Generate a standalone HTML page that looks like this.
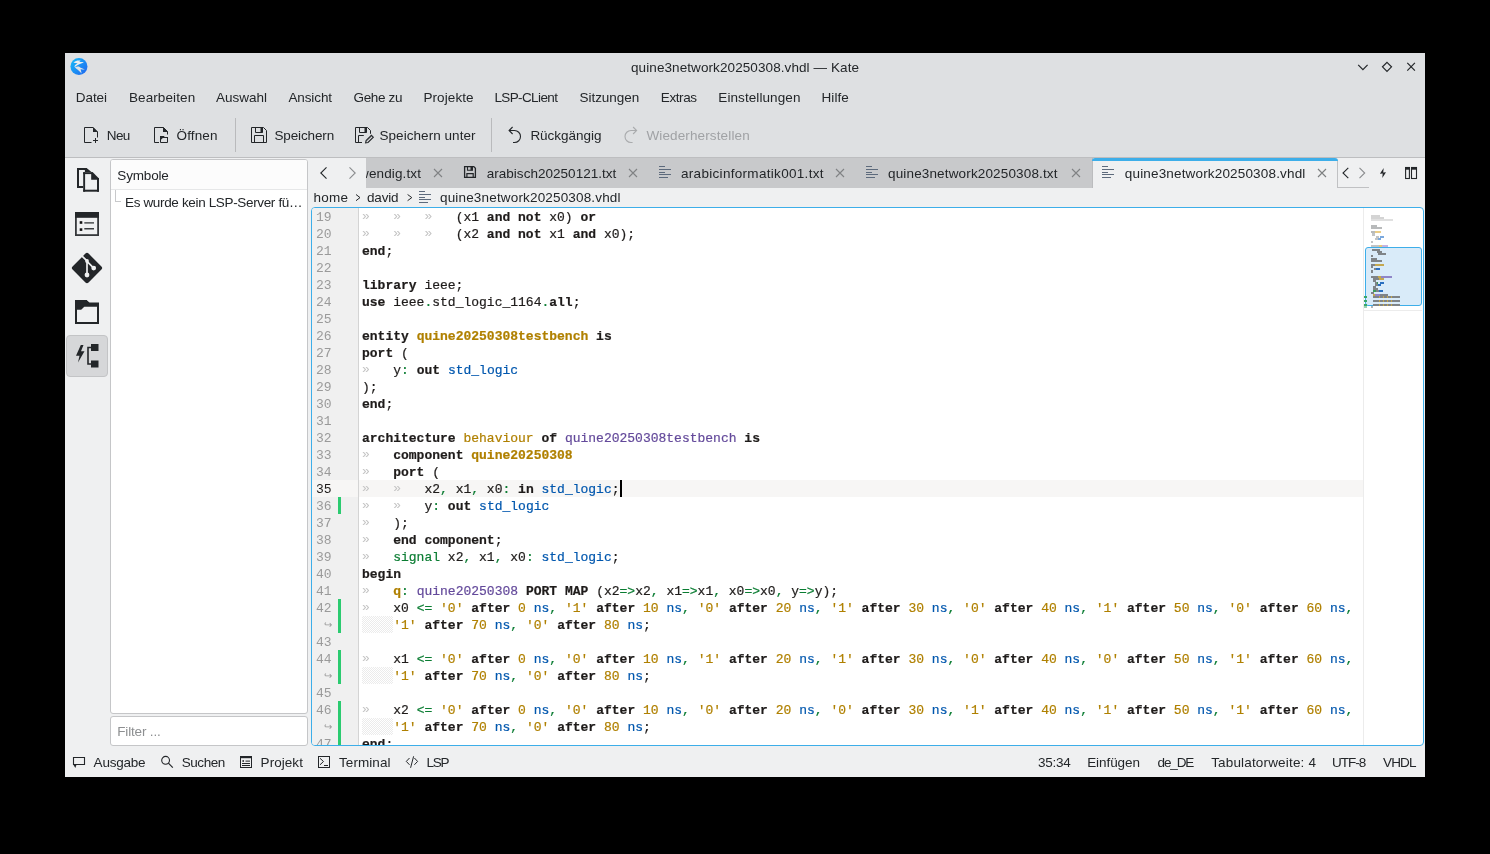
<!DOCTYPE html>
<html><head><meta charset="utf-8"><title>Kate</title><style>
html,body{margin:0;padding:0}
body{width:1490px;height:854px;background:#000;position:relative;overflow:hidden;font-family:"Liberation Sans",sans-serif}
#root{position:absolute;left:0;top:0;width:1490px;height:854px;will-change:transform;background:#000}
.t{position:absolute;white-space:nowrap;line-height:20px}
.r{position:absolute}
.s{position:absolute;overflow:visible}
.clip{position:absolute;overflow:hidden}
.ln{position:absolute;font-family:"Liberation Mono",monospace;font-size:13px;line-height:17px}
.wr{position:absolute;font-family:"Liberation Sans",sans-serif;font-size:10px;line-height:17px;color:#9a9a9a}
.chk{position:absolute;background-color:#fff;background-image:linear-gradient(45deg,#ebebeb 25%,transparent 25%,transparent 75%,#ebebeb 75%),linear-gradient(45deg,#ebebeb 25%,transparent 25%,transparent 75%,#ebebeb 75%);background-size:2px 2px;background-position:0 0,1px 1px}
.cl{position:absolute;left:50px;white-space:pre;font-family:"Liberation Mono",monospace;font-size:13px;line-height:17px;color:#1f1c1b;-webkit-text-stroke:0.2px currentColor}
.k{font-weight:bold}
.g{color:#b08000}
.gb{color:#b08000;font-weight:bold}
.p{color:#644a9b}
.b{color:#0057ae}
.o{color:#0b7d33}
.i{color:#c4c4c4;position:relative;top:-1px;-webkit-text-stroke:0}
</style></head><body><div id="root">
<div class="r" style="left:65px;top:53px;width:1360px;height:724px;background:#eff0f1;"></div>
<div class="r" style="left:65px;top:53px;width:1360px;height:104px;background:#dee0e2;"></div>
<div class="r" style="left:65px;top:157px;width:1360px;height:1px;background:#bdbec0;"></div>
<svg class="s" style="left:68px;top:56px;" width="22" height="22" viewBox="0 0 22 22"><defs><linearGradient id="kg" x1="0.1" y1="0.2" x2="0.9" y2="0.9"><stop offset="0" stop-color="#17b0f7"/><stop offset="1" stop-color="#1f6cf0"/></linearGradient></defs>
<circle cx="10.95" cy="10.6" r="8.5" fill="url(#kg)"/>
<path d="M5.4 6.6 C7.5 4.6 10.5 4.2 12.6 4.7 L11.2 6.1 C13 5.9 14.6 5.9 15.9 6.3 C13.2 8 9.5 8.6 6.6 11.2 C6.2 9.8 7.5 8.4 9.6 7.3 C8 7.1 6.6 6.9 5.4 6.6 Z" fill="#eceef0"/>
<path d="M6.9 11.3 C9.3 10.2 11.4 10.4 12.1 11.6 L16.9 13.5 C15.2 13.7 13.9 13.4 12.6 13 L13.6 17.6 L10.6 14.6 C9.1 13.2 7.6 12.3 6.9 11.3 Z" fill="#dfe2e6"/></svg>
<div class="t" style="left:631.00px;top:58px;font-size:13.5px;color:#232629;letter-spacing:0.088px;">quine3network20250308.vhdl — Kate</div>
<svg class="s" style="left:1350px;top:55px;" width="75" height="25" viewBox="0 0 75 25"><g fill="none" stroke="#232629" stroke-width="1.2">
<path d="M8.2 9.9 L12.9 14.6 L17.6 9.9"/>
<path d="M37 7.3 L41.5 11.8 L37 16.3 L32.5 11.8 Z"/>
<path d="M57.3 7.9 L64.9 15.6 M64.9 7.9 L57.3 15.6"/></g></svg>
<div class="t" style="left:75.70px;top:88px;font-size:13.5px;color:#232629;letter-spacing:-0.031px;">Datei</div>
<div class="t" style="left:128.90px;top:88px;font-size:13.5px;color:#232629;letter-spacing:0.114px;">Bearbeiten</div>
<div class="t" style="left:216.10px;top:88px;font-size:13.5px;color:#232629;letter-spacing:-0.005px;">Auswahl</div>
<div class="t" style="left:288.40px;top:88px;font-size:13.5px;color:#232629;letter-spacing:-0.097px;">Ansicht</div>
<div class="t" style="left:353.60px;top:88px;font-size:13.5px;color:#232629;letter-spacing:-0.372px;">Gehe zu</div>
<div class="t" style="left:423.40px;top:88px;font-size:13.5px;color:#232629;letter-spacing:0.094px;">Projekte</div>
<div class="t" style="left:494.40px;top:88px;font-size:13.5px;color:#232629;letter-spacing:-0.606px;">LSP-CLient</div>
<div class="t" style="left:579.50px;top:88px;font-size:13.5px;color:#232629;letter-spacing:-0.034px;">Sitzungen</div>
<div class="t" style="left:660.80px;top:88px;font-size:13.5px;color:#232629;letter-spacing:-0.414px;">Extras</div>
<div class="t" style="left:718.30px;top:88px;font-size:13.5px;color:#232629;letter-spacing:0.086px;">Einstellungen</div>
<div class="t" style="left:821.60px;top:88px;font-size:13.5px;color:#232629;letter-spacing:0.025px;">Hilfe</div>
<svg class="s" style="left:78px;top:122px;" width="26" height="26" viewBox="0 0 26 26"><path d="M13.5 20.5 H6.5 V5.5 H15 L19.5 10 V15.5" fill="none" stroke="#232629" stroke-width="1"/>
<path d="M15 5 L20 10 H15 Z" fill="#232629"/>
<rect x="17" y="16" width="1" height="5" fill="#232629"/><rect x="15" y="18" width="5" height="1" fill="#232629"/></svg>
<div class="t" style="left:106.80px;top:126px;font-size:13.5px;color:#232629;letter-spacing:-0.636px;">Neu</div>
<svg class="s" style="left:150px;top:122px;" width="26" height="26" viewBox="0 0 26 26"><path d="M9 20.5 H4.5 V5.5 H13.5 L17.5 9.5 V12.5" fill="none" stroke="#232629" stroke-width="1"/>
<path d="M13 5 L18 10 H13 Z" fill="#232629"/>
<path d="M10.5 20.5 V14.5 H13.5 L14.5 15.5 H17.5 V20.5 Z" fill="none" stroke="#232629" stroke-width="1"/>
<path d="M10 14 H13.8 L14.8 15 H18 V16 H12.8 L11.3 17.5 H10 Z" fill="#232629"/></svg>
<div class="t" style="left:176.60px;top:126px;font-size:13.5px;color:#232629;letter-spacing:0.120px;">Öffnen</div>
<div class="r" style="left:235px;top:118px;width:1px;height:34px;background:#b9babc;"></div>
<svg class="s" style="left:246px;top:122px;" width="26" height="26" viewBox="0 0 26 26"><path d="M5.5 5.5 H17.5 L20.5 8.5 V20.5 H5.5 Z" fill="none" stroke="#232629" stroke-width="1"/>
<path d="M9.5 5.5 V10.5 H16.5 V5.5" fill="none" stroke="#232629" stroke-width="1"/>
<rect x="14.5" y="5.5" width="2.2" height="5" fill="#232629"/>
<path d="M8.5 20.5 V13.5 H17.5 V20.5" fill="none" stroke="#232629" stroke-width="1"/></svg>
<div class="t" style="left:274.40px;top:126px;font-size:13.5px;color:#232629;letter-spacing:-0.127px;">Speichern</div>
<svg class="s" style="left:350px;top:122px;" width="26" height="26" viewBox="0 0 26 26"><path d="M12 20.5 H5.5 V5.5 H17.5 L20.5 8.5 V11.8" fill="none" stroke="#232629" stroke-width="1"/>
<path d="M9.5 5.5 V10.5 H16.5 V5.5" fill="none" stroke="#232629" stroke-width="1"/>
<rect x="14.5" y="5.5" width="2.2" height="5" fill="#232629"/>
<path d="M13.8 13.5 H8.5 V20.5" fill="none" stroke="#232629" stroke-width="1"/>
<path d="M15.6 20.9 L16.1 18.6 L21.4 13.3 L23.3 15.2 L18 20.5 Z" fill="none" stroke="#232629" stroke-width="1.1"/>
<path d="M16.8 19.2 L21.8 14.2" stroke="#232629" stroke-width="0.6" stroke-dasharray="0.8 0.8"/></svg>
<div class="t" style="left:379.50px;top:126px;font-size:13.5px;color:#232629;letter-spacing:0.049px;">Speichern unter</div>
<div class="r" style="left:491px;top:118px;width:1px;height:34px;background:#b9babc;"></div>
<svg class="s" style="left:502px;top:122px;" width="26" height="26" viewBox="0 0 26 26"><path d="M7 8.5 H12.5 A6 6 0 0 1 12.5 20.5 H11" fill="none" stroke="#232629" stroke-width="1.1"/>
<path d="M10.6 5 L7.1 8.5 L10.6 12" fill="none" stroke="#232629" stroke-width="1.1"/></svg>
<div class="t" style="left:530.40px;top:126px;font-size:13.5px;color:#232629;letter-spacing:-0.031px;">Rückgängig</div>
<svg class="s" style="left:618px;top:122px;" width="26" height="26" viewBox="0 0 26 26"><path d="M18.7 8.5 H13 A6 6 0 0 0 13 20.5 H14.6" fill="none" stroke="#a9abad" stroke-width="1.1"/>
<path d="M15.1 5 L18.6 8.5 L15.1 12" fill="none" stroke="#a9abad" stroke-width="1.1"/></svg>
<div class="t" style="left:646.40px;top:126px;font-size:13.5px;color:#a0a2a5;letter-spacing:0.132px;">Wiederherstellen</div>
<svg class="s" style="left:74px;top:165px;" width="28" height="30" viewBox="0 0 28 30"><g fill="#232629">
<rect x="3" y="3" width="2" height="20"/><rect x="3" y="3" width="9.6" height="2"/><rect x="3" y="21" width="6.2" height="2"/>
<path d="M10.9 3 H12.6 L17.8 7.2 H10.9 Z"/>
<rect x="9.2" y="7.2" width="1.9" height="19.5"/><rect x="9.2" y="7.2" width="9.6" height="1.9"/>
<rect x="9.2" y="24.7" width="15.8" height="2"/><rect x="23" y="13" width="2" height="13.7"/>
<path d="M17.2 7.2 H18.8 L25 13.4 V14.8 H17.2 Z"/></g></svg>
<svg class="s" style="left:75px;top:212px;" width="24" height="24" viewBox="0 0 24 24"><rect x="0.9" y="0.9" width="22.2" height="22.2" fill="none" stroke="#35383b" stroke-width="1.8"/>
<rect x="0" y="0" width="24" height="5.8" fill="#232629"/>
<rect x="4.7" y="9.2" width="2.6" height="2.6" fill="#111"/><rect x="9.3" y="10.3" width="9.7" height="1.2" fill="#232629"/>
<rect x="4.7" y="16.3" width="2.6" height="2.6" fill="#111"/><rect x="9.3" y="16" width="9.7" height="1.5" fill="#3a3d40"/></svg>
<svg class="s" style="left:70px;top:251px;" width="34" height="34" viewBox="0 0 34 34"><rect x="5.7" y="5.7" width="22.6" height="22.6" rx="2.2" transform="rotate(45 17 17)" fill="#232629"/>
<path d="M11.3 4.3 L17 9.8 V23.5 M17 10.3 L23.7 17.1" fill="none" stroke="#eff0f1" stroke-width="1.7"/>
<circle cx="17" cy="10" r="1.9" fill="#eff0f1"/><circle cx="23.7" cy="17.1" r="2.4" fill="#eff0f1"/><circle cx="17" cy="24" r="2.4" fill="#eff0f1"/></svg>
<svg class="s" style="left:75px;top:300px;" width="24" height="24" viewBox="0 0 24 24"><path d="M1 23 V1 H11 L14 3.5 H23 V23 Z" fill="none" stroke="#232629" stroke-width="2"/>
<path d="M0 0 H11.5 L14.5 3 H24 V6.5 H9 L6 9.5 H0 Z" fill="#232629"/>
<path d="M1 8.5 H6 L9 5.5 H23" fill="none" stroke="#232629" stroke-width="2"/></svg>
<div class="r" style="left:66px;top:335px;width:42px;height:42px;background:#d6d7d9;border:1px solid #c3c4c6;border-radius:4px;box-sizing:border-box"></div>
<svg class="s" style="left:74px;top:343px;" width="26" height="26" viewBox="0 0 26 26"><path d="M6.3 1.5 L1.5 12.2 H5 L3.5 19 L10 7.8 H6.5 L9 1.5 Z" fill="#232629" transform="translate(0.5,0.5)"/>
<rect x="17" y="1" width="7.5" height="7" fill="#232629"/>
<rect x="17" y="17.5" width="7.5" height="7" fill="#232629"/>
<path d="M17 4.5 H14 V21 H17" fill="none" stroke="#232629" stroke-width="1.6"/></svg>
<div class="r" style="left:110px;top:159px;width:198px;height:555px;background:#ffffff;border:1px solid #c5c6c8;border-radius:3px;box-sizing:border-box"></div>
<div class="r" style="left:111px;top:160px;width:196px;height:29px;background:#fcfcfc;border-radius:2px 2px 0 0"></div>
<div class="r" style="left:111px;top:189px;width:196px;height:1px;background:#e6e7e8;"></div>
<div class="t" style="left:117.30px;top:166px;font-size:13.5px;color:#232629;letter-spacing:-0.169px;">Symbole</div>
<div class="r" style="left:115px;top:190px;width:1px;height:11px;background:#c8c9cb;"></div>
<div class="r" style="left:115px;top:201px;width:6px;height:1px;background:#c8c9cb;"></div>
<div class="t" style="left:125.00px;top:193px;font-size:13.5px;color:#232629;letter-spacing:-0.346px;">Es wurde kein LSP-Server fü…</div>
<div class="r" style="left:110px;top:716px;width:198px;height:30px;background:#ffffff;border:1px solid #c5c6c8;border-radius:3px;box-sizing:border-box"></div>
<div class="t" style="left:117.30px;top:722px;font-size:13.5px;color:#8d8f91;letter-spacing:-0.169px;">Filter ...</div>
<svg class="s" style="left:318px;top:165px;" width="40" height="16" viewBox="0 0 40 16"><path d="M8.5 2.3 L2.8 8 L8.5 13.7" fill="none" stroke="#232629" stroke-width="1.1"/>
<path d="M31.5 2.3 L37.2 8 L31.5 13.7" fill="none" stroke="#8a8c8e" stroke-width="1.1"/></svg>
<div class="r" style="left:366px;top:158px;width:727px;height:30px;background:#c8c9cb;"></div>
<div class="r" style="left:1092px;top:158px;width:1px;height:30px;background:#bbbcbe;"></div>
<div class="r" style="left:366px;top:158px;width:70px;height:30px;overflow:hidden">
<div class="t" style="left:-26.17px;top:6px;font-size:13.5px;color:#232629;letter-spacing:0.133px;">notwendig.txt</div>
</div>
<svg class="s" style="left:433px;top:168px;" width="10" height="10" viewBox="0 0 10 10"><path d="M1 1 L9 9 M9 1 L1 9" stroke="#808284" stroke-width="1.1"/></svg>
<svg class="s" style="left:458px;top:160px;" width="26" height="26" viewBox="0 0 26 26"><path d="M6.6 6.6 H15.8 L17.4 8.2 V17.4 H6.6 Z" fill="none" stroke="#232629" stroke-width="1.3"/>
<path d="M9.5 6.6 V10.3 H14.4 V6.6" fill="none" stroke="#232629" stroke-width="1.1"/>
<rect x="12.5" y="6.6" width="2.2" height="3.8" fill="#232629"/>
<path d="M8.9 17.4 V13.6 H15.2 V17.4" fill="none" stroke="#232629" stroke-width="1.2"/></svg>
<div class="t" style="left:486.70px;top:164px;font-size:13.5px;color:#232629;letter-spacing:0.030px;">arabisch20250121.txt</div>
<svg class="s" style="left:628px;top:168px;" width="10" height="10" viewBox="0 0 10 10"><path d="M1 1 L9 9 M9 1 L1 9" stroke="#808284" stroke-width="1.1"/></svg>
<svg class="s" style="left:659px;top:166px;" width="13" height="12" viewBox="0 0 13 12"><g fill="#5d6a7c"><rect x="0" y="0" width="6" height="1"/><rect x="0" y="3" width="12" height="1"/><rect x="0" y="6" width="6" height="1"/><rect x="0" y="8" width="12" height="1"/><rect x="0" y="11" width="9" height="1"/></g></svg>
<div class="t" style="left:681.00px;top:164px;font-size:13.5px;color:#232629;letter-spacing:0.304px;">arabicinformatik001.txt</div>
<svg class="s" style="left:835px;top:168px;" width="10" height="10" viewBox="0 0 10 10"><path d="M1 1 L9 9 M9 1 L1 9" stroke="#808284" stroke-width="1.1"/></svg>
<svg class="s" style="left:866px;top:166px;" width="13" height="12" viewBox="0 0 13 12"><g fill="#5d6a7c"><rect x="0" y="0" width="6" height="1"/><rect x="0" y="3" width="12" height="1"/><rect x="0" y="6" width="6" height="1"/><rect x="0" y="8" width="12" height="1"/><rect x="0" y="11" width="9" height="1"/></g></svg>
<div class="t" style="left:888.00px;top:164px;font-size:13.5px;color:#232629;letter-spacing:0.152px;">quine3network20250308.txt</div>
<svg class="s" style="left:1071px;top:168px;" width="10" height="10" viewBox="0 0 10 10"><path d="M1 1 L9 9 M9 1 L1 9" stroke="#808284" stroke-width="1.1"/></svg>
<div class="r" style="left:1092px;top:158px;width:246px;height:3px;background:#3daee9;border-radius:3px 3px 0 0"></div>
<svg class="s" style="left:1102px;top:166px;" width="13" height="12" viewBox="0 0 13 12"><g fill="#5d6a7c"><rect x="0" y="0" width="6" height="1"/><rect x="0" y="3" width="12" height="1"/><rect x="0" y="6" width="6" height="1"/><rect x="0" y="8" width="12" height="1"/><rect x="0" y="11" width="9" height="1"/></g></svg>
<div class="t" style="left:1124.80px;top:164px;font-size:13.5px;color:#232629;letter-spacing:0.165px;">quine3network20250308.vhdl</div>
<svg class="s" style="left:1317px;top:168px;" width="10" height="10" viewBox="0 0 10 10"><path d="M1 1 L9 9 M9 1 L1 9" stroke="#7d7f81" stroke-width="1.1"/></svg>
<div class="r" style="left:1337px;top:161px;width:1px;height:27px;background:#c0c1c3;"></div>
<div class="r" style="left:1337px;top:187px;width:32px;height:1px;background:#c0c1c3;"></div>
<svg class="s" style="left:1338px;top:165px;" width="30" height="16" viewBox="0 0 30 16"><path d="M10.3 2.8 L5 8 L10.3 13.2" fill="none" stroke="#232629" stroke-width="1.1"/>
<path d="M21.5 2.8 L26.7 8 L21.5 13.2" fill="none" stroke="#8a8c8e" stroke-width="1.1"/></svg>
<svg class="s" style="left:1374px;top:162px;" width="16" height="20" viewBox="0 0 16 20"><path d="M9.7 6 L5.9 11.7 L8.7 11.4 L8.3 16 L12 10.2 L9.2 10.5 Z" fill="#232629"/></svg>
<svg class="s" style="left:1404px;top:166px;" width="14" height="14" viewBox="0 0 14 14"><rect x="1.6" y="1.5" width="3.8" height="11" fill="none" stroke="#232629" stroke-width="1.1"/>
<rect x="7.5" y="1.5" width="5" height="11" fill="none" stroke="#232629" stroke-width="1.1"/>
<rect x="1" y="1" width="5" height="2.7" fill="#232629"/><rect x="7" y="1" width="6" height="2.7" fill="#232629"/></svg>
<div class="t" style="left:313.40px;top:188px;font-size:13.5px;color:#232629;letter-spacing:0.283px;">home</div>
<svg class="s" style="left:354px;top:192px;" width="9" height="11" viewBox="0 0 9 11"><path d="M2 2.5 L6 5.6 L2 8.7" fill="none" stroke="#232629" stroke-width="1"/></svg>
<div class="t" style="left:367.00px;top:188px;font-size:13.5px;color:#232629;letter-spacing:-0.191px;">david</div>
<svg class="s" style="left:406px;top:192px;" width="9" height="11" viewBox="0 0 9 11"><path d="M1.6 2.5 L5.8 5.6 L1.6 8.7" fill="none" stroke="#232629" stroke-width="1"/></svg>
<svg class="s" style="left:419px;top:191px;" width="13" height="12" viewBox="0 0 13 12"><g fill="#5d6a7c"><rect x="0" y="0" width="6" height="1"/><rect x="0" y="3" width="12" height="1"/><rect x="0" y="6" width="6" height="1"/><rect x="0" y="8" width="12" height="1"/><rect x="0" y="11" width="9" height="1"/></g></svg>
<div class="t" style="left:440.00px;top:188px;font-size:13.5px;color:#232629;letter-spacing:0.165px;">quine3network20250308.vhdl</div>
<div class="r" style="left:311px;top:207px;width:1113px;height:539px;background:#ffffff;border:1px solid #3daee9;border-radius:4px;box-sizing:border-box"></div>
<div class="r" style="left:312px;top:208px;width:46px;height:537px;background:#f0f0f0;border-radius:3px 0 0 3px"></div>
<div class="r" style="left:358px;top:208px;width:1px;height:537px;background:#d4d4d4;"></div>
<div class="r" style="left:1363px;top:208px;width:1px;height:537px;background:#ececec;"></div>
<div class="r" style="left:359px;top:480px;width:1004px;height:17px;background:#f7f6f5;"></div>
<div class="r" style="left:312px;top:480px;width:46px;height:17px;background:#f7f6f5;"></div>
<div class="clip" style="left:312px;top:208px;width:1051px;height:537px;">
<div class="ln" style="left:3.90px;top:1px;color:#9a9a9a">19</div>
<div class="ln" style="left:3.90px;top:18px;color:#9a9a9a">20</div>
<div class="ln" style="left:3.90px;top:35px;color:#9a9a9a">21</div>
<div class="ln" style="left:3.90px;top:52px;color:#9a9a9a">22</div>
<div class="ln" style="left:3.90px;top:69px;color:#9a9a9a">23</div>
<div class="ln" style="left:3.90px;top:86px;color:#9a9a9a">24</div>
<div class="ln" style="left:3.90px;top:103px;color:#9a9a9a">25</div>
<div class="ln" style="left:3.90px;top:120px;color:#9a9a9a">26</div>
<div class="ln" style="left:3.90px;top:137px;color:#9a9a9a">27</div>
<div class="ln" style="left:3.90px;top:154px;color:#9a9a9a">28</div>
<div class="ln" style="left:3.90px;top:171px;color:#9a9a9a">29</div>
<div class="ln" style="left:3.90px;top:188px;color:#9a9a9a">30</div>
<div class="ln" style="left:3.90px;top:205px;color:#9a9a9a">31</div>
<div class="ln" style="left:3.90px;top:222px;color:#9a9a9a">32</div>
<div class="ln" style="left:3.90px;top:239px;color:#9a9a9a">33</div>
<div class="ln" style="left:3.90px;top:256px;color:#9a9a9a">34</div>
<div class="ln" style="left:3.90px;top:273px;color:#1f1c1b">35</div>
<div class="ln" style="left:3.90px;top:290px;color:#9a9a9a">36</div>
<div class="r" style="left:26px;top:289px;width:3px;height:17px;background:#2bcb70"></div>
<div class="ln" style="left:3.90px;top:307px;color:#9a9a9a">37</div>
<div class="ln" style="left:3.90px;top:324px;color:#9a9a9a">38</div>
<div class="ln" style="left:3.90px;top:341px;color:#9a9a9a">39</div>
<div class="ln" style="left:3.90px;top:358px;color:#9a9a9a">40</div>
<div class="ln" style="left:3.90px;top:375px;color:#9a9a9a">41</div>
<div class="ln" style="left:3.90px;top:392px;color:#9a9a9a">42</div>
<div class="r" style="left:26px;top:391px;width:3px;height:17px;background:#2bcb70"></div>
<div class="wr" style="left:12px;top:408px">↪</div>
<div class="chk" style="left:50px;top:408px;width:31px;height:17px"></div>
<div class="r" style="left:26px;top:408px;width:3px;height:17px;background:#2bcb70"></div>
<div class="ln" style="left:3.90px;top:426px;color:#9a9a9a">43</div>
<div class="ln" style="left:3.90px;top:443px;color:#9a9a9a">44</div>
<div class="r" style="left:26px;top:442px;width:3px;height:17px;background:#2bcb70"></div>
<div class="wr" style="left:12px;top:459px">↪</div>
<div class="chk" style="left:50px;top:459px;width:31px;height:17px"></div>
<div class="r" style="left:26px;top:459px;width:3px;height:17px;background:#2bcb70"></div>
<div class="ln" style="left:3.90px;top:477px;color:#9a9a9a">45</div>
<div class="ln" style="left:3.90px;top:494px;color:#9a9a9a">46</div>
<div class="r" style="left:26px;top:493px;width:3px;height:17px;background:#2bcb70"></div>
<div class="wr" style="left:12px;top:510px">↪</div>
<div class="chk" style="left:50px;top:510px;width:31px;height:17px"></div>
<div class="r" style="left:26px;top:510px;width:3px;height:17px;background:#2bcb70"></div>
<div class="ln" style="left:3.90px;top:528px;color:#9a9a9a">47</div>
<div class="r" style="left:26px;top:527px;width:3px;height:17px;background:#2bcb70"></div>
<div class="cl" style="top:1px"><span class="i">»   »   »   </span><span class="n">(x1 </span><span class="k">and</span><span class="n"> </span><span class="k">not</span><span class="n"> x0) </span><span class="k">or</span></div>
<div class="cl" style="top:18px"><span class="i">»   »   »   </span><span class="n">(x2 </span><span class="k">and</span><span class="n"> </span><span class="k">not</span><span class="n"> x1 </span><span class="k">and</span><span class="n"> x0);</span></div>
<div class="cl" style="top:35px"><span class="k">end</span><span class="n">;</span></div>
<div class="cl" style="top:52px"></div>
<div class="cl" style="top:69px"><span class="k">library</span><span class="n"> ieee;</span></div>
<div class="cl" style="top:86px"><span class="k">use</span><span class="n"> ieee</span><span class="o">.</span><span class="n">std_logic_1164</span><span class="o">.</span><span class="k">all</span><span class="n">;</span></div>
<div class="cl" style="top:103px"></div>
<div class="cl" style="top:120px"><span class="k">entity</span><span class="n"> </span><span class="gb">quine20250308testbench</span><span class="n"> </span><span class="k">is</span></div>
<div class="cl" style="top:137px"><span class="k">port</span><span class="n"> (</span></div>
<div class="cl" style="top:154px"><span class="i">»   </span><span class="n">y</span><span class="o">:</span><span class="n"> </span><span class="k">out</span><span class="n"> </span><span class="b">std_logic</span></div>
<div class="cl" style="top:171px"><span class="n">);</span></div>
<div class="cl" style="top:188px"><span class="k">end</span><span class="n">;</span></div>
<div class="cl" style="top:205px"></div>
<div class="cl" style="top:222px"><span class="k">architecture</span><span class="n"> </span><span class="g">behaviour</span><span class="n"> </span><span class="k">of</span><span class="n"> </span><span class="p">quine20250308testbench</span><span class="n"> </span><span class="k">is</span></div>
<div class="cl" style="top:239px"><span class="i">»   </span><span class="k">component</span><span class="n"> </span><span class="gb">quine20250308</span></div>
<div class="cl" style="top:256px"><span class="i">»   </span><span class="k">port</span><span class="n"> (</span></div>
<div class="cl" style="top:273px"><span class="i">»   »   </span><span class="n">x2</span><span class="o">,</span><span class="n"> x1</span><span class="o">,</span><span class="n"> x0</span><span class="o">:</span><span class="n"> </span><span class="k">in</span><span class="n"> </span><span class="b">std_logic</span><span class="n">;</span></div>
<div class="cl" style="top:290px"><span class="i">»   »   </span><span class="n">y</span><span class="o">:</span><span class="n"> </span><span class="k">out</span><span class="n"> </span><span class="b">std_logic</span></div>
<div class="cl" style="top:307px"><span class="i">»   </span><span class="n">);</span></div>
<div class="cl" style="top:324px"><span class="i">»   </span><span class="k">end</span><span class="n"> </span><span class="k">component</span><span class="n">;</span></div>
<div class="cl" style="top:341px"><span class="i">»   </span><span class="o">signal</span><span class="n"> x2</span><span class="o">,</span><span class="n"> x1</span><span class="o">,</span><span class="n"> x0</span><span class="o">:</span><span class="n"> </span><span class="b">std_logic</span><span class="n">;</span></div>
<div class="cl" style="top:358px"><span class="k">begin</span></div>
<div class="cl" style="top:375px"><span class="i">»   </span><span class="gb">q</span><span class="o">:</span><span class="n"> </span><span class="p">quine20250308</span><span class="n"> </span><span class="k">PORT</span><span class="n"> </span><span class="k">MAP</span><span class="n"> (x2</span><span class="o">=&gt;</span><span class="n">x2</span><span class="o">,</span><span class="n"> x1</span><span class="o">=&gt;</span><span class="n">x1</span><span class="o">,</span><span class="n"> x0</span><span class="o">=&gt;</span><span class="n">x0</span><span class="o">,</span><span class="n"> y</span><span class="o">=&gt;</span><span class="n">y);</span></div>
<div class="cl" style="top:392px"><span class="i">»   </span><span class="n">x0</span><span class="n"> </span><span class="o">&lt;=</span><span class="n"> </span><span class="g">&#x27;0&#x27;</span><span class="n"> </span><span class="k">after</span><span class="n"> </span><span class="g">0</span><span class="n"> </span><span class="b">ns</span><span class="o">,</span><span class="n"> </span><span class="g">&#x27;1&#x27;</span><span class="n"> </span><span class="k">after</span><span class="n"> </span><span class="g">10</span><span class="n"> </span><span class="b">ns</span><span class="o">,</span><span class="n"> </span><span class="g">&#x27;0&#x27;</span><span class="n"> </span><span class="k">after</span><span class="n"> </span><span class="g">20</span><span class="n"> </span><span class="b">ns</span><span class="o">,</span><span class="n"> </span><span class="g">&#x27;1&#x27;</span><span class="n"> </span><span class="k">after</span><span class="n"> </span><span class="g">30</span><span class="n"> </span><span class="b">ns</span><span class="o">,</span><span class="n"> </span><span class="g">&#x27;0&#x27;</span><span class="n"> </span><span class="k">after</span><span class="n"> </span><span class="g">40</span><span class="n"> </span><span class="b">ns</span><span class="o">,</span><span class="n"> </span><span class="g">&#x27;1&#x27;</span><span class="n"> </span><span class="k">after</span><span class="n"> </span><span class="g">50</span><span class="n"> </span><span class="b">ns</span><span class="o">,</span><span class="n"> </span><span class="g">&#x27;0&#x27;</span><span class="n"> </span><span class="k">after</span><span class="n"> </span><span class="g">60</span><span class="n"> </span><span class="b">ns</span><span class="o">,</span></div>
<div class="cl" style="top:409px"><span class="n">    </span><span class="g">&#x27;1&#x27;</span><span class="n"> </span><span class="k">after</span><span class="n"> </span><span class="g">70</span><span class="n"> </span><span class="b">ns</span><span class="o">,</span><span class="n"> </span><span class="g">&#x27;0&#x27;</span><span class="n"> </span><span class="k">after</span><span class="n"> </span><span class="g">80</span><span class="n"> </span><span class="b">ns</span><span class="n">;</span></div>
<div class="cl" style="top:426px"></div>
<div class="cl" style="top:443px"><span class="i">»   </span><span class="n">x1</span><span class="n"> </span><span class="o">&lt;=</span><span class="n"> </span><span class="g">&#x27;0&#x27;</span><span class="n"> </span><span class="k">after</span><span class="n"> </span><span class="g">0</span><span class="n"> </span><span class="b">ns</span><span class="o">,</span><span class="n"> </span><span class="g">&#x27;0&#x27;</span><span class="n"> </span><span class="k">after</span><span class="n"> </span><span class="g">10</span><span class="n"> </span><span class="b">ns</span><span class="o">,</span><span class="n"> </span><span class="g">&#x27;1&#x27;</span><span class="n"> </span><span class="k">after</span><span class="n"> </span><span class="g">20</span><span class="n"> </span><span class="b">ns</span><span class="o">,</span><span class="n"> </span><span class="g">&#x27;1&#x27;</span><span class="n"> </span><span class="k">after</span><span class="n"> </span><span class="g">30</span><span class="n"> </span><span class="b">ns</span><span class="o">,</span><span class="n"> </span><span class="g">&#x27;0&#x27;</span><span class="n"> </span><span class="k">after</span><span class="n"> </span><span class="g">40</span><span class="n"> </span><span class="b">ns</span><span class="o">,</span><span class="n"> </span><span class="g">&#x27;0&#x27;</span><span class="n"> </span><span class="k">after</span><span class="n"> </span><span class="g">50</span><span class="n"> </span><span class="b">ns</span><span class="o">,</span><span class="n"> </span><span class="g">&#x27;1&#x27;</span><span class="n"> </span><span class="k">after</span><span class="n"> </span><span class="g">60</span><span class="n"> </span><span class="b">ns</span><span class="o">,</span></div>
<div class="cl" style="top:460px"><span class="n">    </span><span class="g">&#x27;1&#x27;</span><span class="n"> </span><span class="k">after</span><span class="n"> </span><span class="g">70</span><span class="n"> </span><span class="b">ns</span><span class="o">,</span><span class="n"> </span><span class="g">&#x27;0&#x27;</span><span class="n"> </span><span class="k">after</span><span class="n"> </span><span class="g">80</span><span class="n"> </span><span class="b">ns</span><span class="n">;</span></div>
<div class="cl" style="top:477px"></div>
<div class="cl" style="top:494px"><span class="i">»   </span><span class="n">x2</span><span class="n"> </span><span class="o">&lt;=</span><span class="n"> </span><span class="g">&#x27;0&#x27;</span><span class="n"> </span><span class="k">after</span><span class="n"> </span><span class="g">0</span><span class="n"> </span><span class="b">ns</span><span class="o">,</span><span class="n"> </span><span class="g">&#x27;0&#x27;</span><span class="n"> </span><span class="k">after</span><span class="n"> </span><span class="g">10</span><span class="n"> </span><span class="b">ns</span><span class="o">,</span><span class="n"> </span><span class="g">&#x27;0&#x27;</span><span class="n"> </span><span class="k">after</span><span class="n"> </span><span class="g">20</span><span class="n"> </span><span class="b">ns</span><span class="o">,</span><span class="n"> </span><span class="g">&#x27;0&#x27;</span><span class="n"> </span><span class="k">after</span><span class="n"> </span><span class="g">30</span><span class="n"> </span><span class="b">ns</span><span class="o">,</span><span class="n"> </span><span class="g">&#x27;1&#x27;</span><span class="n"> </span><span class="k">after</span><span class="n"> </span><span class="g">40</span><span class="n"> </span><span class="b">ns</span><span class="o">,</span><span class="n"> </span><span class="g">&#x27;1&#x27;</span><span class="n"> </span><span class="k">after</span><span class="n"> </span><span class="g">50</span><span class="n"> </span><span class="b">ns</span><span class="o">,</span><span class="n"> </span><span class="g">&#x27;1&#x27;</span><span class="n"> </span><span class="k">after</span><span class="n"> </span><span class="g">60</span><span class="n"> </span><span class="b">ns</span><span class="o">,</span></div>
<div class="cl" style="top:511px"><span class="n">    </span><span class="g">&#x27;1&#x27;</span><span class="n"> </span><span class="k">after</span><span class="n"> </span><span class="g">70</span><span class="n"> </span><span class="b">ns</span><span class="o">,</span><span class="n"> </span><span class="g">&#x27;0&#x27;</span><span class="n"> </span><span class="k">after</span><span class="n"> </span><span class="g">80</span><span class="n"> </span><span class="b">ns</span><span class="n">;</span></div>
<div class="cl" style="top:528px"><span class="k">end</span><span class="n">;</span></div>
<div class="r" style="left:308px;top:272px;width:2px;height:17px;background:#000"></div>
</div>
<div class="r" style="left:1365px;top:247px;width:57px;height:59px;background:#d9ebf9;border:1.3px solid #3daee9;border-radius:3px;box-sizing:border-box"></div>
<div class="r" style="left:1371px;top:215px;width:9px;height:2px;background:#d4d4d4;opacity:1"></div>
<div class="r" style="left:1371px;top:217px;width:13px;height:2px;background:#d4d4d4;opacity:1"></div>
<div class="r" style="left:1371px;top:219px;width:22px;height:2px;background:#e0e0e0;opacity:1"></div>
<div class="r" style="left:1371px;top:225px;width:6px;height:2px;background:#9a9c9e;opacity:0.7"></div>
<div class="r" style="left:1371px;top:227px;width:11px;height:2px;background:#9a9c9e;opacity:0.7"></div>
<div class="r" style="left:1371px;top:231px;width:4px;height:2px;background:#9a9c9e;opacity:0.7"></div>
<div class="r" style="left:1375px;top:231px;width:6px;height:2px;background:#e8c87a;opacity:0.9"></div>
<div class="r" style="left:1372px;top:233px;width:3px;height:3px;background:#9a9c9e;opacity:0.6"></div>
<div class="r" style="left:1376px;top:236px;width:3px;height:2px;background:#9a9c9e;opacity:0.6"></div>
<div class="r" style="left:1380px;top:236px;width:4px;height:2px;background:#7aa8dd;opacity:1"></div>
<div class="r" style="left:1375px;top:238px;width:5px;height:2px;background:#9a9c9e;opacity:0.6"></div>
<div class="r" style="left:1378px;top:238px;width:3px;height:2px;background:#7aa8dd;opacity:1"></div>
<div class="r" style="left:1371px;top:241px;width:2px;height:2px;background:#9a9c9e;opacity:0.6"></div>
<div class="r" style="left:1371px;top:245px;width:8px;height:2px;background:#9a9c9e;opacity:0.6"></div>
<div class="r" style="left:1379px;top:245px;width:3px;height:2px;background:#e8c87a;opacity:1"></div>
<div class="r" style="left:1382px;top:245px;width:6px;height:2px;background:#c6b3e0;opacity:1"></div>
<div class="r" style="left:1372px;top:249px;width:8px;height:2px;background:#7f8488;opacity:1"></div>
<div class="r" style="left:1377px;top:251px;width:5px;height:2px;background:#7f8488;opacity:1"></div>
<div class="r" style="left:1378px;top:253px;width:8px;height:2px;background:#7f8488;opacity:1"></div>
<div class="r" style="left:1371px;top:255px;width:2px;height:2px;background:#7f8488;opacity:1"></div>
<div class="r" style="left:1371px;top:258px;width:6px;height:2px;background:#7f8488;opacity:1"></div>
<div class="r" style="left:1371px;top:260px;width:11px;height:2px;background:#7f8488;opacity:1"></div>
<div class="r" style="left:1371px;top:264px;width:4px;height:2px;background:#7f8488;opacity:1"></div>
<div class="r" style="left:1375px;top:264px;width:9px;height:2px;background:#c4a850;opacity:1"></div>
<div class="r" style="left:1371px;top:266px;width:2px;height:2px;background:#7f8488;opacity:1"></div>
<div class="r" style="left:1374px;top:268px;width:3px;height:2px;background:#7f8488;opacity:1"></div>
<div class="r" style="left:1376px;top:268px;width:4px;height:2px;background:#2a6fc0;opacity:1"></div>
<div class="r" style="left:1371px;top:270px;width:2px;height:3px;background:#7f8488;opacity:1"></div>
<div class="r" style="left:1371px;top:276px;width:7px;height:2px;background:#7f8488;opacity:1"></div>
<div class="r" style="left:1378px;top:276px;width:3px;height:2px;background:#c4a850;opacity:1"></div>
<div class="r" style="left:1381px;top:276px;width:11px;height:2px;background:#8f86c8;opacity:1"></div>
<div class="r" style="left:1373px;top:278px;width:6px;height:2px;background:#7f8488;opacity:1"></div>
<div class="r" style="left:1379px;top:278px;width:5px;height:2px;background:#c4a850;opacity:1"></div>
<div class="r" style="left:1373px;top:280px;width:3px;height:2px;background:#7f8488;opacity:1"></div>
<div class="r" style="left:1375px;top:282px;width:2px;height:2px;background:#7f8488;opacity:1"></div>
<div class="r" style="left:1377px;top:282px;width:1px;height:2px;background:#3a9a5a;opacity:1"></div>
<div class="r" style="left:1380px;top:282px;width:4px;height:2px;background:#2a6fc0;opacity:1"></div>
<div class="r" style="left:1375px;top:284px;width:3px;height:2px;background:#7f8488;opacity:1"></div>
<div class="r" style="left:1378px;top:284px;width:3px;height:2px;background:#2a6fc0;opacity:1"></div>
<div class="r" style="left:1373px;top:286px;width:3px;height:2px;background:#7f8488;opacity:1"></div>
<div class="r" style="left:1373px;top:288px;width:5px;height:2px;background:#7f8488;opacity:1"></div>
<div class="r" style="left:1373px;top:290px;width:3px;height:2px;background:#3a9a5a;opacity:1"></div>
<div class="r" style="left:1376px;top:290px;width:3px;height:2px;background:#7f8488;opacity:1"></div>
<div class="r" style="left:1379px;top:290px;width:4px;height:2px;background:#2a6fc0;opacity:1"></div>
<div class="r" style="left:1371px;top:292px;width:3px;height:2px;background:#7f8488;opacity:1"></div>
<div class="r" style="left:1373px;top:294px;width:2px;height:2px;background:#c4a850;opacity:1"></div>
<div class="r" style="left:1375px;top:294px;width:5px;height:2px;background:#8f86c8;opacity:1"></div>
<div class="r" style="left:1380px;top:294px;width:5px;height:2px;background:#7f8488;opacity:1"></div>
<div class="r" style="left:1385px;top:294px;width:3px;height:2px;background:#7f8488;opacity:1"></div>
<div class="r" style="left:1364px;top:296px;width:3px;height:2px;background:#3aa86a;opacity:1"></div>
<div class="r" style="left:1373px;top:296px;width:6px;height:2px;background:#7f8488;opacity:1"></div>
<div class="r" style="left:1379px;top:296px;width:1px;height:2px;background:#c4a850;opacity:1"></div>
<div class="r" style="left:1380px;top:296px;width:3px;height:2px;background:#7f8488;opacity:1"></div>
<div class="r" style="left:1383px;top:296px;width:1px;height:2px;background:#c4a850;opacity:1"></div>
<div class="r" style="left:1384px;top:296px;width:3px;height:2px;background:#7f8488;opacity:1"></div>
<div class="r" style="left:1387px;top:296px;width:1px;height:2px;background:#c4a850;opacity:1"></div>
<div class="r" style="left:1388px;top:296px;width:3px;height:2px;background:#7f8488;opacity:1"></div>
<div class="r" style="left:1391px;top:296px;width:1px;height:2px;background:#c4a850;opacity:1"></div>
<div class="r" style="left:1392px;top:296px;width:8px;height:2px;background:#7f8488;opacity:1"></div>
<div class="r" style="left:1364px;top:300px;width:3px;height:2px;background:#3aa86a;opacity:1"></div>
<div class="r" style="left:1373px;top:300px;width:6px;height:2px;background:#7f8488;opacity:1"></div>
<div class="r" style="left:1379px;top:300px;width:1px;height:2px;background:#c4a850;opacity:1"></div>
<div class="r" style="left:1380px;top:300px;width:3px;height:2px;background:#7f8488;opacity:1"></div>
<div class="r" style="left:1383px;top:300px;width:1px;height:2px;background:#c4a850;opacity:1"></div>
<div class="r" style="left:1384px;top:300px;width:3px;height:2px;background:#7f8488;opacity:1"></div>
<div class="r" style="left:1387px;top:300px;width:1px;height:2px;background:#c4a850;opacity:1"></div>
<div class="r" style="left:1388px;top:300px;width:3px;height:2px;background:#7f8488;opacity:1"></div>
<div class="r" style="left:1391px;top:300px;width:1px;height:2px;background:#c4a850;opacity:1"></div>
<div class="r" style="left:1392px;top:300px;width:8px;height:2px;background:#7f8488;opacity:1"></div>
<div class="r" style="left:1364px;top:304px;width:3px;height:2px;background:#3aa86a;opacity:1"></div>
<div class="r" style="left:1373px;top:304px;width:6px;height:2px;background:#7f8488;opacity:1"></div>
<div class="r" style="left:1379px;top:304px;width:1px;height:2px;background:#c4a850;opacity:1"></div>
<div class="r" style="left:1380px;top:304px;width:3px;height:2px;background:#7f8488;opacity:1"></div>
<div class="r" style="left:1383px;top:304px;width:1px;height:2px;background:#c4a850;opacity:1"></div>
<div class="r" style="left:1384px;top:304px;width:3px;height:2px;background:#7f8488;opacity:1"></div>
<div class="r" style="left:1387px;top:304px;width:1px;height:2px;background:#c4a850;opacity:1"></div>
<div class="r" style="left:1388px;top:304px;width:3px;height:2px;background:#7f8488;opacity:1"></div>
<div class="r" style="left:1391px;top:304px;width:1px;height:2px;background:#c4a850;opacity:1"></div>
<div class="r" style="left:1392px;top:304px;width:8px;height:2px;background:#7f8488;opacity:1"></div>
<div class="r" style="left:1364px;top:306px;width:3px;height:2px;background:#3aa86a;opacity:0.5"></div>
<div class="r" style="left:1371px;top:306px;width:2px;height:2px;background:#7f8488;opacity:0.6"></div>
<div class="r" style="left:1364px;top:310px;width:58px;height:1px;background:#ececec;"></div>
<svg class="s" style="left:72px;top:756px;" width="14" height="13" viewBox="0 0 14 13"><path d="M1.5 1.5 H12.5 V8.5 H1.5 Z" fill="none" stroke="#232629" stroke-width="1.1"/><path d="M1 8.2 H4.6 L3.4 12 Z" fill="#232629"/></svg>
<div class="t" style="left:93.60px;top:753px;font-size:13.5px;color:#232629;letter-spacing:-0.221px;">Ausgabe</div>
<svg class="s" style="left:160px;top:756px;" width="16" height="14" viewBox="0 0 16 14"><circle cx="5.6" cy="4.3" r="3.9" fill="none" stroke="#232629" stroke-width="1.1"/><path d="M8.4 7.1 L12.8 11.6" stroke="#232629" stroke-width="1.2"/></svg>
<div class="t" style="left:181.80px;top:753px;font-size:13.5px;color:#232629;letter-spacing:-0.473px;">Suchen</div>
<svg class="s" style="left:239px;top:756px;" width="14" height="13" viewBox="0 0 14 13"><rect x="1.5" y="0.5" width="11" height="11" fill="none" stroke="#232629" stroke-width="1"/><rect x="1" y="0" width="12" height="2.2" fill="#232629"/>
<rect x="3.4" y="4.2" width="1.6" height="1.6" fill="#232629"/><rect x="6.5" y="4.6" width="4.5" height="1" fill="#232629"/><rect x="3" y="7" width="8" height="1" fill="#232629"/><rect x="3" y="9" width="8" height="1" fill="#232629"/></svg>
<div class="t" style="left:260.60px;top:753px;font-size:13.5px;color:#232629;letter-spacing:0.052px;">Projekt</div>
<svg class="s" style="left:317px;top:756px;" width="14" height="13" viewBox="0 0 14 13"><rect x="1.5" y="0.5" width="11" height="11" fill="none" stroke="#232629" stroke-width="1"/><path d="M3 2.3 L6.5 5.5 L3 8.8" fill="none" stroke="#232629" stroke-width="1"/><rect x="7" y="9" width="4" height="1" fill="#232629"/></svg>
<div class="t" style="left:339.00px;top:753px;font-size:13.5px;color:#232629;letter-spacing:0.067px;">Terminal</div>
<svg class="s" style="left:405px;top:756px;" width="14" height="13" viewBox="0 0 14 13"><path d="M4.5 2 L1.3 5.4 L4.5 8.8 M9.4 2 L12.6 5.4 L9.4 8.8 M8.6 0.3 L5.6 11.8" fill="none" stroke="#232629" stroke-width="1"/></svg>
<div class="t" style="left:426.40px;top:753px;font-size:13.5px;color:#232629;letter-spacing:-1.158px;">LSP</div>
<div class="t" style="left:1038.00px;top:753px;font-size:13.5px;color:#232629;letter-spacing:-0.254px;">35:34</div>
<div class="t" style="left:1087.20px;top:753px;font-size:13.5px;color:#232629;letter-spacing:-0.075px;">Einfügen</div>
<div class="t" style="left:1157.50px;top:753px;font-size:13.5px;color:#232629;letter-spacing:-1.128px;">de_DE</div>
<div class="t" style="left:1211.20px;top:753px;font-size:13.5px;color:#232629;letter-spacing:0.165px;">Tabulatorweite: 4</div>
<div class="t" style="left:1332.00px;top:753px;font-size:13.5px;color:#232629;letter-spacing:-0.968px;">UTF-8</div>
<div class="t" style="left:1383.00px;top:753px;font-size:13.5px;color:#232629;letter-spacing:-0.815px;">VHDL</div>
</div></body></html>
